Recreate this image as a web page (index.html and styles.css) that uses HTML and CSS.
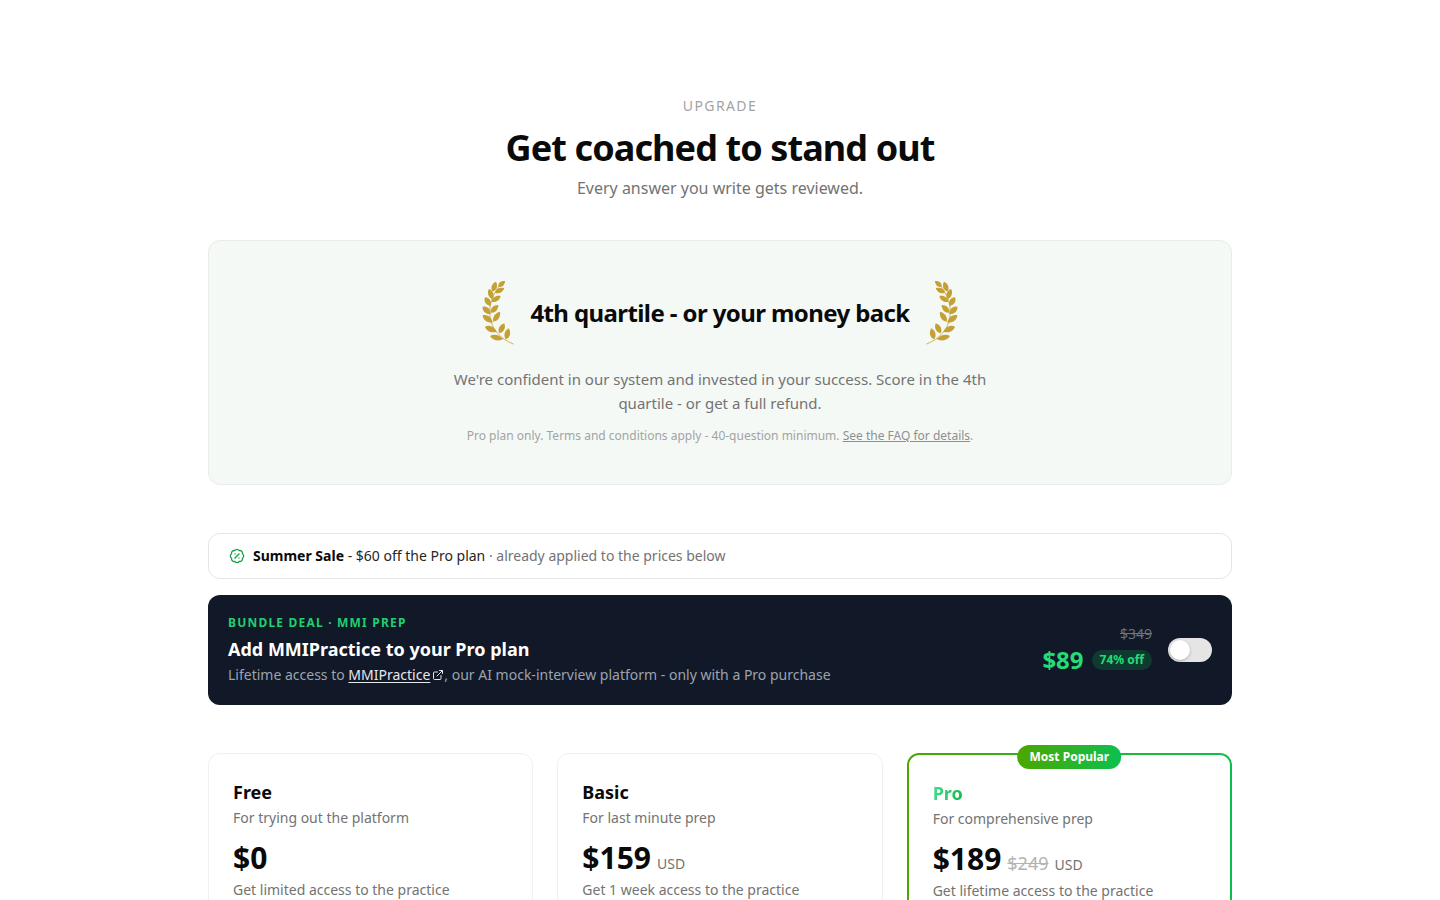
FILE: index.html
```html
<!DOCTYPE html>
<html lang="en">
<head>
<meta charset="utf-8">
<title>Upgrade</title>
<link rel="stylesheet" href="styles.css">
</head>
<body>
<svg class="defs" width="0" height="0" aria-hidden="true">
  <defs>
    <path id="leaf" d="M-15 0C-8 -11 6 -11 15 0C6 11 -8 11 -15 0Z"/>
    <symbol id="laurel" viewBox="30 30 108 204">
      <path d="M130 222C90 205 66 180 60 140C56 105 68 70 92 44" fill="none" stroke="currentColor" stroke-width="2.4" stroke-linecap="round"/>
      <g fill="currentColor">
        <use href="#leaf" transform="translate(73 50) rotate(-71) scale(1.03 .95)"/>
        <use href="#leaf" transform="translate(62.5 72.5) rotate(70) scale(1.1 .95)"/>
        <use href="#leaf" transform="translate(53.5 95) rotate(57) scale(1.03 1)"/>
        <use href="#leaf" transform="translate(50 121) rotate(42) scale(1.08 1)"/>
        <use href="#leaf" transform="translate(53 147) rotate(36) scale(1.24 1)"/>
        <use href="#leaf" transform="translate(62.5 177.5) rotate(23) scale(1.27 1)"/>
        <use href="#leaf" transform="translate(80 203) rotate(14) scale(1.37 .95)"/>
        <use href="#leaf" transform="translate(95 41.5) rotate(-40) scale(.87 .85)"/>
        <use href="#leaf" transform="translate(89 61.5) rotate(-25) scale(1.03 .85)"/>
        <use href="#leaf" transform="translate(78.5 86.5) rotate(-32) scale(1.06 .9)"/>
        <use href="#leaf" transform="translate(73.5 116.5) rotate(-45) scale(1.08 .95)"/>
        <use href="#leaf" transform="translate(80 140) rotate(-56) scale(1.2 .95)"/>
        <use href="#leaf" transform="translate(95.5 175) rotate(-63) scale(1.12 1)"/>
        <use href="#leaf" transform="translate(112 191.5) rotate(-76) scale(1.13 1)"/>
      </g>
    </symbol>
  </defs>
</svg>
<main class="page">
  <header class="hero">
    <p class="eyebrow">UPGRADE</p>
    <h1 class="hero-title">Get coached to stand out</h1>
    <p class="hero-sub">Every answer you write gets reviewed.</p>
  </header>

  <section class="guarantee">
    <div class="guarantee-head">
      <svg class="laurel" width="36" height="68"><use href="#laurel"/></svg>
      <h2 class="guarantee-title">4th quartile - or your money back</h2>
      <svg class="laurel laurel-right" width="36" height="68"><use href="#laurel"/></svg>
    </div>
    <p class="guarantee-text">We're confident in our system and invested in your success. Score in the 4th quartile - or get a full refund.</p>
    <p class="guarantee-fine">Pro plan only. Terms and conditions apply - 40-question minimum. <a class="fine-link" href="#">See the FAQ for details</a>.</p>
  </section>

  <div class="sale">
    <svg class="sale-icon" width="16" height="16" viewBox="0 0 24 24" fill="none" stroke="currentColor" stroke-width="2" stroke-linecap="round" stroke-linejoin="round">
      <path d="M3.85 8.62a4 4 0 0 1 4.78-4.77 4 4 0 0 1 6.74 0 4 4 0 0 1 4.78 4.78 4 4 0 0 1 0 6.74 4 4 0 0 1-4.77 4.78 4 4 0 0 1-6.75 0 4 4 0 0 1-4.78-4.77 4 4 0 0 1 0-6.76Z"/>
      <path d="M15 9l-6 6"/>
      <path d="M9 9h.01"/>
      <path d="M15 15h.01"/>
    </svg>
    <p class="sale-text"><strong class="sale-name">Summer Sale</strong> - $60 off the Pro plan <span class="sale-muted">· already applied to the prices below</span></p>
  </div>

  <section class="bundle">
    <div class="bundle-info">
      <p class="bundle-label">BUNDLE DEAL · MMI PREP</p>
      <h3 class="bundle-title">Add MMIPractice to your Pro plan</h3>
      <p class="bundle-desc">Lifetime access to <a class="bundle-link" href="#">MMIPractice</a><svg class="ext-icon" width="12" height="12" viewBox="0 0 24 24" fill="none" stroke="currentColor" stroke-width="2" stroke-linecap="round" stroke-linejoin="round"><path d="M18 13v6a2 2 0 0 1-2 2H5a2 2 0 0 1-2-2V8a2 2 0 0 1 2-2h6"/><path d="M15 3h6v6"/><path d="M10 14 21 3"/></svg>, our AI mock-interview platform - only with a Pro purchase</p>
    </div>
    <div class="bundle-price">
      <span class="bundle-old">$349</span>
      <div class="bundle-now">
        <span class="bundle-amount">$89</span>
        <span class="bundle-off">74% off</span>
      </div>
    </div>
    <span class="toggle"><span class="toggle-knob"></span></span>
  </section>

  <section class="plans">
    <article class="plan">
      <h3 class="plan-name">Free</h3>
      <p class="plan-for">For trying out the platform</p>
      <div class="plan-price"><span class="plan-amount">$0</span></div>
      <p class="plan-desc">Get limited access to the practice questions and feedback</p>
    </article>
    <article class="plan">
      <h3 class="plan-name">Basic</h3>
      <p class="plan-for">For last minute prep</p>
      <div class="plan-price"><span class="plan-amount">$159</span><span class="plan-usd">USD</span></div>
      <p class="plan-desc">Get 1 week access to the practice questions and feedback</p>
    </article>
    <article class="plan plan-pro">
      <span class="plan-badge">Most Popular</span>
      <h3 class="plan-name plan-name-pro">Pro</h3>
      <p class="plan-for">For comprehensive prep</p>
      <div class="plan-price"><span class="plan-amount">$189</span><s class="plan-old">$249</s><span class="plan-usd">USD</span></div>
      <p class="plan-desc">Get lifetime access to the practice questions and feedback</p>
    </article>
  </section>
</main>
</body>
</html>
```
FILE: styles.css
```css
* { box-sizing: border-box; }
html, body { margin: 0; padding: 0; height: 900px; overflow: hidden; background: #fff; }
body { font-family: "Noto Sans", sans-serif; color: #0a0a0a; }
p, h1, h2, h3 { margin: 0; }
.defs { display: block; height: 0; }
.page { width: 1024px; margin: 0 auto; padding-top: 96px; }

.hero { text-align: center; margin-bottom: 40px; }
.eyebrow { font-size: 14px; line-height: 20px; letter-spacing: 1.4px; color: #a3a3a3; margin-bottom: 12px; }
.hero-title { font-size: 36px; line-height: 40px; font-weight: 700; letter-spacing: -0.9px; color: #0a0a0a; margin-bottom: 8px; }
.hero-sub { font-size: 16px; line-height: 24px; color: #737373; }

.guarantee { height: 245px; padding: 40px 32px; background: #f4f9f6; border: 1px solid #e8ede9; border-radius: 12px; text-align: center; margin-bottom: 48px; }
.guarantee-head { display: flex; justify-content: center; align-items: center; gap: 14px; height: 66px; margin-bottom: 20px; }
.laurel { color: #c4a035; flex: none; }
.laurel-right { transform: scaleX(-1); }
.guarantee-title { font-size: 24px; line-height: 32px; font-weight: 700; letter-spacing: -0.6px; margin-top: -2px; }
.guarantee-text { width: 576px; margin: 0 auto 13px; font-size: 15px; line-height: 24px; color: #737373; }
.guarantee-fine { font-size: 12px; line-height: 16px; color: #a3a3a3; }
.fine-link { color: #8f8f8f; text-decoration: underline; }

.sale { display: flex; align-items: center; gap: 8px; height: 46px; padding: 0 20px; border: 1px solid #e5e5e5; border-radius: 12px; margin-bottom: 16px; }
.sale-icon { color: #16a34a; flex: none; }
.sale-text { font-size: 14px; line-height: 20px; color: #262626; }
.sale-name { font-weight: 700; color: #0a0a0a; }
.sale-muted { color: #737373; }

.bundle { display: flex; align-items: center; height: 110px; padding: 0 20px; background: #111827; border-radius: 12px; margin-bottom: 48px; }
.bundle-info { flex: 1; }
.bundle-label { font-size: 12px; line-height: 16px; font-weight: 700; letter-spacing: 1.2px; color: #1fcf70; margin-bottom: 4px; }
.bundle-title { font-size: 18px; line-height: 28px; font-weight: 700; color: #fff; }
.bundle-desc { font-size: 14px; line-height: 20px; color: #9ca3af; margin-top: 2px; }
.bundle-link { color: #e5e7eb; text-decoration: underline; text-underline-offset: 2px; }
.ext-icon { margin-left: 2px; vertical-align: -1px; color: #e5e7eb; }
.bundle-price { display: flex; flex-direction: column; align-items: flex-end; margin-right: 16px; }
.bundle-old { font-size: 14px; line-height: 20px; color: #6b7280; text-decoration: line-through; }
.bundle-now { display: flex; align-items: center; gap: 8px; }
.bundle-amount { font-size: 24px; line-height: 32px; font-weight: 700; color: #22dd77; }
.bundle-off { padding: 2px 8px; font-size: 12px; line-height: 16px; font-weight: 700; color: #22dd77; background: #0f3a30; border-radius: 999px; }
.toggle { display: flex; align-items: center; flex: none; width: 44px; height: 24px; padding: 2px; background: #e5e5e5; border-radius: 999px; }
.toggle-knob { width: 20px; height: 20px; background: #fff; border-radius: 50%; box-shadow: 0 1px 3px rgba(0,0,0,.25); }

.plans { display: grid; grid-template-columns: repeat(3, 1fr); gap: 24px; }
.plan { position: relative; height: 400px; padding: 24px; border: 1px solid #f0f0f0; border-radius: 12px; }
.plan-pro { border: 2px solid transparent; background: linear-gradient(#fff, #fff) padding-box, linear-gradient(90deg, #4ca600, #0cc04e) border-box; }
.plan-badge { position: absolute; top: -10px; left: 50%; transform: translateX(-50%); padding: 0 12px; font-size: 12px; line-height: 24px; font-weight: 700; color: #fff; white-space: nowrap; background: linear-gradient(90deg, #4ca600, #0cc04e); border-radius: 999px; }
.plan-name { font-size: 18px; line-height: 28px; font-weight: 700; margin-bottom: 2px; }
.plan-name-pro { width: max-content; color: transparent; background: linear-gradient(90deg, #3edd8c, #14b84a); -webkit-background-clip: text; background-clip: text; }
.plan-for { font-size: 14px; line-height: 20px; color: #737373; margin-bottom: 10px; }
.plan-price { display: flex; align-items: baseline; gap: 6px; height: 40px; }
.plan-amount { font-size: 30px; line-height: 40px; font-weight: 700; }
.plan-old { font-size: 18px; color: #b3b3b3; }
.plan-usd { font-size: 14px; color: #737373; }
.plan-desc { font-size: 14px; line-height: 20px; color: #737373; margin-top: 2px; }
```
